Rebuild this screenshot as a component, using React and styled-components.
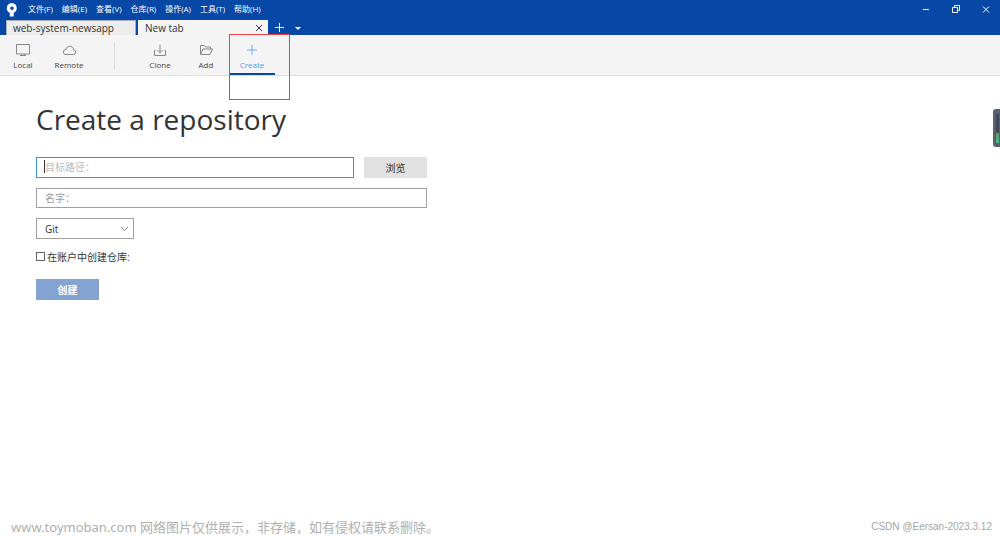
import React from "react";
import styled, { createGlobalStyle } from "styled-components";

const GlobalStyle = createGlobalStyle`
  *, *::before, *::after { box-sizing: border-box; }
  body {
    margin: 0;
    background: #fff;
    color: #333;
    font-family: "Open Sans", "Noto Sans CJK SC", sans-serif;
  }
  button, input, select { font: inherit; color: inherit; margin: 0; }
`;

const Window = styled.div`
  display: flex;
  flex-direction: column;
  min-height: 100vh;
  position: relative;
  overflow: hidden;
`;

const Header = styled.header`
  background: #0747a6;
  color: #fff;
`;

const TitleBar = styled.div`
  display: flex;
  align-items: center;
  height: 20px;
  padding: 0 8px 2px 6px;
`;

const Menu = styled.nav`
  display: flex;
  gap: 9px;
  margin-left: 10px;
  flex: 1;
`;

const PlainButton = styled.button`
  display: flex;
  align-items: center;
  justify-content: center;
  border: 0;
  padding: 0;
  background: none;
`;

const MenuItem = styled(PlainButton)`
  font-size: 8px;
  line-height: 12px;
  white-space: nowrap;
`;

const WindowControls = styled.div`
  display: flex;
  gap: 18px;
`;

const ControlButton = styled(PlainButton)`
  width: 12px;
  height: 12px;
`;

const TabBar = styled.div`
  display: flex;
  height: 15px;
  padding-left: 6px;
  gap: 2px;
`;

const Tab = styled.div`
  display: flex;
  align-items: center;
  justify-content: space-between;
  width: 130px;
  height: 15px;
  padding: 0 4px 1px 6px;
  background: ${(p) => (p.$active ? "#f4f4f4" : "#ececec")};
  border: 1px solid ${(p) => (p.$active ? "#f4f4f4" : "#a5acb8")};
  border-bottom: 0;
  color: #333;
`;

const TabLabel = styled(PlainButton)`
  font-size: 10px;
  line-height: 12px;
`;

const TabTools = styled.div`
  display: flex;
  align-items: center;
  gap: 10px;
  padding-left: 4px;
`;

const Toolbar = styled.div`
  display: flex;
  height: 41px;
  background: #f4f4f4;
  border-bottom: 1px solid #dcdcdc;
`;

const ToolSlot = styled.div`
  position: relative;
  width: 46px;
`;

const ToolButton = styled(PlainButton)`
  flex-direction: column;
  justify-content: flex-start;
  gap: 2px;
  width: 100%;
  height: 40px;
  padding-top: 8px;
  font-size: 8px;
  line-height: 12px;
  color: ${(p) => (p.$active ? "#4c9aff" : "#444")};
  border-bottom: ${(p) => (p.$active ? "2px solid #0747a6" : "0")};

  svg { color: ${(p) => (p.$active ? "#6aaeff" : "#888")}; }
`;

const Divider = styled.div`
  width: 1px;
  height: 28px;
  margin: 7px 22px 0;
  background: #dcdcdc;
`;

const Highlight = styled.div`
  position: absolute;
  top: -1px;
  left: 0;
  width: 61px;
  height: 66px;
  border: 1px solid #ee4044;
  pointer-events: none;
  z-index: 1;
`;

const Main = styled.main`
  flex: 1;
  padding: 22px 36px;
`;

const Title = styled.h1`
  margin: 0 0 17px;
  font-size: 28px;
  line-height: 42px;
  font-weight: 400;
`;

const Form = styled.form`
  display: flex;
  flex-direction: column;
  align-items: flex-start;
  gap: 10px;
  max-width: 391px;
  font-size: 10px;
`;

const Row = styled.div`
  display: flex;
  gap: 10px;
  width: 100%;
`;

const Field = styled.div`
  position: relative;
  flex: 1;
  display: flex;
`;

const TextInput = styled.input`
  flex: 1;
  min-width: 0;
  height: ${(p) => (p.$active ? "21px" : "20px")};
  padding: 0 8px 1px;
  border: 1px solid ${(p) => (p.$active ? "#3b8eed" : "#a0a0a0")};
  background: #fff;
  outline: 0;

  &::placeholder {
    color: ${(p) => (p.$active ? "#bcbcbc" : "#999")};
    opacity: 1;
  }
`;

const Caret = styled.span`
  position: absolute;
  left: 8px;
  top: 3px;
  width: 1px;
  height: 13px;
  background: #333;
`;

const ActionButton = styled(PlainButton)`
  width: 63px;
  height: 21px;
  font-size: 10px;
  background: ${(p) => (p.$primary ? "#83a3d3" : "#e1e1e1")};
  color: ${(p) => (p.$primary ? "#fff" : "#333")};
  font-weight: ${(p) => (p.$primary ? 700 : 400)};
`;

const SelectBox = styled.div`
  position: relative;
  width: 98px;
  height: 21px;

  svg {
    position: absolute;
    right: 5px;
    top: 8px;
    pointer-events: none;
  }
`;

const Select = styled.select`
  appearance: none;
  width: 100%;
  height: 100%;
  padding: 0 8px;
  border: 1px solid #a0a0a0;
  border-radius: 0;
  background: #fff;
`;

const CheckLabel = styled.label`
  display: flex;
  align-items: center;
  gap: 2px;
  height: 15px;
  margin-bottom: 5px;
`;

const CheckBox = styled.input`
  appearance: none;
  width: 9px;
  height: 9px;
  border: 1px solid #666;
  background: #fff;

  &:checked { background: #0747a6; }
`;

const SideWidget = styled.div`
  position: absolute;
  right: 0;
  top: 109px;
  width: 7px;
  height: 38px;
  padding: 5px 1px 4px 3px;
  border-radius: 3px 0 0 3px;
  background: #596070;
`;

const Meter = styled.div`
  height: 100%;
  background: linear-gradient(#40485a 66%, #5f9c5c 66%, #3fb98c);
`;

const Footer = styled.footer`
  display: flex;
  justify-content: space-between;
  align-items: center;
  height: 18px;
  padding: 0 8px 0 11px;
  color: #b0b0b0;
  font-size: 13px;
  line-height: 18px;
  font-family: "Noto Sans", "Noto Sans CJK SC", sans-serif;
`;

const Credit = styled.span`
  font-family: "Liberation Sans", sans-serif;
  font-size: 10px;
  color: #a5a5a5;
`;

const Icon = ({ w, h, children }) => (
  <svg width={w} height={h} viewBox={`0 0 ${w} ${h}`} fill="none" stroke="currentColor" strokeWidth="1" aria-hidden="true">
    {children}
  </svg>
);

const Logo = () => (
  <svg width="12" height="15" viewBox="0 0 12 15" aria-hidden="true">
    <path fill="#fff" fillRule="evenodd" d="M6 1a5.2 5.2 0 0 0-2.2 9.900V14.600h3.900v-3.700A5.200 5.200 0 0 0 6 1Zm0 3.400a1.800 1.800 0 1 1 0 3.600 1.800 1.800 0 0 1 0-3.600Z" />
  </svg>
);

const tools = {
  Local: <Icon w={14} h={14}><path d="M.5 1.500h13v9.500H.5zM5.500 11v1.500M8.500 11v1.500M4 12.500h6" /></Icon>,
  Remote: <Icon w={15} h={14}><path d="M4 11.500h7.200a2.300 2.300 0 0 0 .4-4.600C11.300 4.600 9.800 3.200 7.700 3.200 5.700 3.200 4.500 4.600 4.100 6.300 2.400 6.500 1.300 7.500 1.300 9 1.300 10.500 2.400 11.500 4 11.500Z" /></Icon>,
  Clone: <Icon w={14} h={14}><path d="M2.500 7.500h-1v5h11v-5h-1M7 1.500v8M4.500 7.100l2.500 2.500 2.500-2.500" /></Icon>,
  Add: <Icon w={14} h={14}><path d="M1.500 11.500v-9h3.800l1.200 1.500h5v2M1.500 11.500l2.500-5.500h9.500l-2.500 5.500z" /></Icon>,
  Create: <Icon w={14} h={14}><path d="M7 2v10M2 7h10" /></Icon>,
};

const Tool = ({ name, active, children }) => (
  <ToolSlot>
    <ToolButton type="button" $active={active}>
      {tools[name]}
      {name}
    </ToolButton>
    {children}
  </ToolSlot>
);

const menus = ["文件(F)", "编辑(E)", "查看(V)", "仓库(R)", "操作(A)", "工具(T)", "帮助(H)"];

export default function App() {
  return (
    <Window>
      <GlobalStyle />
      <Header>
        <TitleBar>
          <Logo />
          <Menu>
            {menus.map((m) => <MenuItem key={m} type="button">{m}</MenuItem>)}
          </Menu>
          <WindowControls>
            <ControlButton type="button" aria-label="Minimize">
              <Icon w={12} h={12}><path d="M3 6.500h6" /></Icon>
            </ControlButton>
            <ControlButton type="button" aria-label="Restore">
              <Icon w={12} h={12}><path d="M2.500 4.500h5v5h-5zM4.500 4.500v-2h5v5h-2" /></Icon>
            </ControlButton>
            <ControlButton type="button" aria-label="Close">
              <Icon w={12} h={12}><path d="M3 3.500l6 6M9 3.500l-6 6" /></Icon>
            </ControlButton>
          </WindowControls>
        </TitleBar>
        <TabBar>
          <Tab><TabLabel type="button">web-system-newsapp</TabLabel></Tab>
          <Tab $active>
            <TabLabel type="button">New tab</TabLabel>
            <PlainButton type="button" aria-label="Close tab">
              <Icon w={8} h={9}><path d="M1 2l6 6M7 2l-6 6" /></Icon>
            </PlainButton>
          </Tab>
          <TabTools>
            <PlainButton type="button" aria-label="Open tab">
              <Icon w={11} h={11}><path d="M5.500 1v9M1 5.500h9" /></Icon>
            </PlainButton>
            <PlainButton type="button" aria-label="Tab list">
              <svg width="6" height="4" viewBox="0 0 6 4" aria-hidden="true"><path d="M0 1h6L3 4z" fill="#fff" /></svg>
            </PlainButton>
          </TabTools>
        </TabBar>
      </Header>
      <Toolbar>
        <Tool name="Local" />
        <Tool name="Remote" />
        <Divider />
        <Tool name="Clone" />
        <Tool name="Add" />
        <Tool name="Create" active><Highlight /></Tool>
      </Toolbar>
      <Main>
        <Title>Create a repository</Title>
        <Form onSubmit={(e) => e.preventDefault()}>
          <Row>
            <Field>
              <TextInput $active aria-label="目标路径" placeholder="目标路径：" />
              <Caret />
            </Field>
            <ActionButton type="button">浏览</ActionButton>
          </Row>
          <Row>
            <TextInput aria-label="名字" placeholder="名字：" />
          </Row>
          <SelectBox>
            <Select aria-label="仓库类型" defaultValue="Git">
              <option>Git</option>
              <option>Mercurial</option>
            </Select>
            <Icon w={9} h={6}><path d="M1 1l3.500 3.500L8 1" stroke="#888" /></Icon>
          </SelectBox>
          <CheckLabel>
            <CheckBox type="checkbox" />
            在账户中创建仓库:
          </CheckLabel>
          <ActionButton type="submit" $primary>创建</ActionButton>
        </Form>
      </Main>
      <Footer>
        <span>www.toymoban.com 网络图片仅供展示，非存储，如有侵权请联系删除。</span>
        <Credit>CSDN @Eersan-2023.3.12</Credit>
      </Footer>
      <SideWidget><Meter /></SideWidget>
    </Window>
  );
}
